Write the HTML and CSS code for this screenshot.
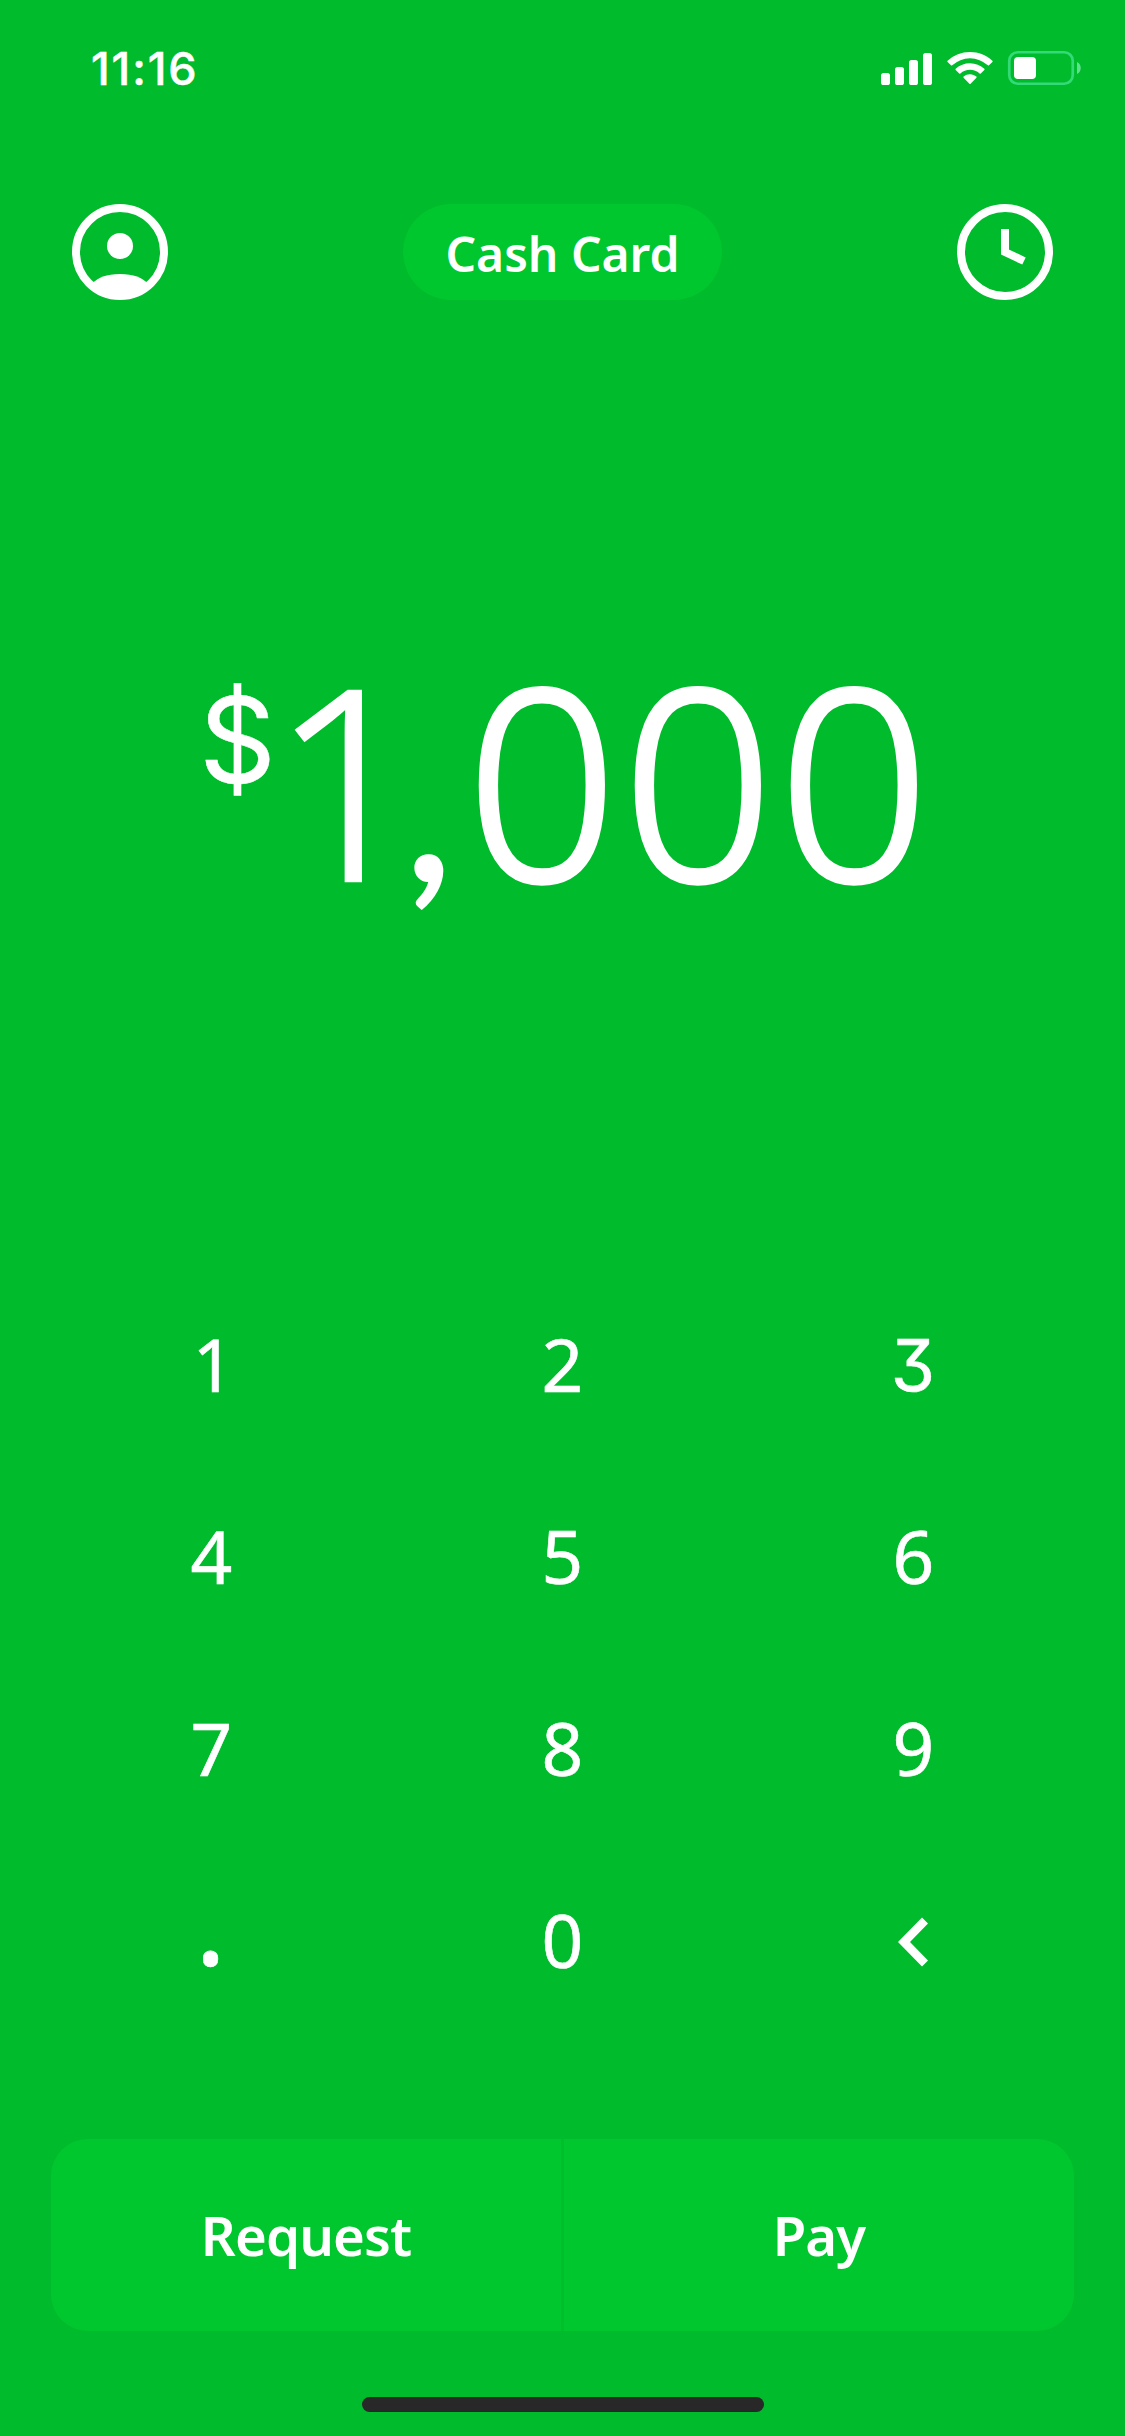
FILE: index.html
```html
<!DOCTYPE html>
<html lang="en">
<head>
<meta charset="utf-8">
<title>Cash</title>
<link rel="stylesheet" href="styles.css">
</head>
<body>
<main class="screen">
  <div class="status">
    <span class="time">11:16</span>
    <svg class="indicators" width="204" height="40" viewBox="0 0 204 40" fill="#fff" aria-hidden="true">
      <rect x="1" y="24" width="9" height="12" rx="2.6"/>
      <rect x="15" y="18" width="9" height="18" rx="2.6"/>
      <rect x="29" y="11" width="9" height="25" rx="2.6"/>
      <rect x="43" y="4" width="9" height="32" rx="2.6"/>
      <path d="M90 3c8.600 0 16.500 3.300 22.400 8.700q.6.600 0 1.200l-3.400 3.400q-.6.600-1.200 0a26.200 26.200 0 0 0-35.600 0q-.6.600-1.200 0l-3.400-3.400q-.6-.6 0-1.200A33 33 0 0 1 90 3z"/>
      <path d="M90 14.300c5.500 0 10.500 2.100 14.300 5.500q.7.600 0 1.300l-3.500 3.400q-.6.600-1.200 0a14.300 14.300 0 0 0-19.200 0q-.6.600-1.200 0l-3.500-3.400q-.7-.7 0-1.300A21.400 21.400 0 0 1 90 14.300z"/>
      <path d="M90 25.200c2.500 0 4.700.9 6.400 2.400q.6.600 0 1.200l-5.800 6q-.6.600-1.200 0l-5.800-6q-.6-.6 0-1.200a9.800 9.800 0 0 1 6.400-2.400z"/>
      <rect x="129.250" y="3.250" width="63.500" height="31.500" rx="8.500" fill="none" stroke="#35da78" stroke-width="2.700"/>
      <rect x="134" y="8" width="22" height="22" rx="4"/>
      <path d="M197 13c5 2.200 5 9.800 0 12z" fill="#5fe08f"/>
    </svg>
  </div>

  <header class="header">
    <svg width="96" height="96" viewBox="0 0 96 96" aria-label="Profile">
      <circle cx="48" cy="48" r="44" fill="none" stroke="#fff" stroke-width="8"/>
      <circle cx="48" cy="42" r="13" fill="#fff"/>
      <path d="M20 80Q28 70 48 70T76 80A44 44 0 0 1 20 80z" fill="#fff"/>
    </svg>
    <button class="pill">Cash Card</button>
    <svg width="96" height="96" viewBox="0 0 96 96" fill="none" stroke="#fff" stroke-width="8" aria-label="Activity">
      <circle cx="48" cy="48" r="44"/>
      <path d="M48 25V48L67 57"/>
    </svg>
  </header>

  <div class="amount"><span class="dollar">$</span><span class="digit lead">1</span><span class="comma">,</span><span class="digit">0</span><span class="digit">0</span><span class="digit">0</span></div>

  <div class="keypad">
    <span class="one">1</span><span>2</span><span class="three">3</span>
    <span class="nudge">4</span><span>5</span><span class="back-nudge">6</span>
    <span class="nudge">7</span><span>8</span><span class="back-nudge">9</span>
    <span class="point">.</span><span>0</span>
    <span><svg width="30" height="50" viewBox="0 0 30 50" class="back" aria-label="Delete"><path d="M24 .5L30 6.500L12 25L30 43.500L24 49.500L0 25z" fill="#fff"/></svg></span>
  </div>

  <div class="actions">
    <button class="request">Request</button>
    <button class="pay">Pay</button>
  </div>
  <div class="home"></div>
</main>
</body>
</html>
```
FILE: styles.css
```css
* { box-sizing: border-box; }
body { margin: 0; background: #00bb2c; }
button { border: 0; padding: 0; color: inherit; font: inherit; }
svg { display: block; }
.screen {
  display: flex;
  flex-direction: column;
  width: 1125px;
  height: 2436px;
  overflow: hidden;
  background: #00bb2c;
  color: #fff;
  font-family: "Noto Sans", "Open Sans", sans-serif;
}
.status {
  display: flex;
  justify-content: space-between;
  height: 204px;
  padding: 49px 41px 0 91px;
}
.time {
  font: 500 45px/40px Inter, sans-serif;
  letter-spacing: 1.900px;
  -webkit-text-stroke: 0.500px #fff;
}
.header {
  display: flex;
  justify-content: space-between;
  height: 96px;
  padding: 0 72px;
}
.pill {
  width: 319px;
  height: 96px;
  padding-top: 3px;
  border-radius: 48px;
  background: #00c72d;
  font-size: 48px;
  font-weight: 600;
  line-height: 93px;
}
.amount {
  display: flex;
  height: 300px;
  margin-top: 328px;
  padding-left: 199px;
  line-height: 300px;
  font-size: 266px;
  font-weight: 300;
}
.digit {
  width: 156px;
  -webkit-text-stroke: 4px #fff;
}
.lead {
  width: 135px;
  letter-spacing: -20px;
  -webkit-text-stroke-width: 2.500px;
}
.dollar {
  width: 72px;
  font: 400 120px/224px Inter, sans-serif;
  letter-spacing: -8px;
  -webkit-text-stroke: 0.500px #fff;
}
.comma {
  width: 60px;
  font: 700 195px/359px Lato, sans-serif;
}
.keypad {
  display: grid;
  grid-template-columns: repeat(3, 352px);
  grid-auto-rows: 192px;
  justify-content: center;
  margin-top: 340px;
  font-size: 73px;
  font-weight: 400;
  line-height: 192px;
  text-align: center;
  -webkit-text-stroke: 0.600px #fff;
}
.one { padding-left: 6px; }
.nudge { padding-left: 2px; }
.back-nudge { padding-right: 2px; }
.three {
  padding-right: 3px;
  font-family: Inter, sans-serif;
  font-size: 71.500px;
  line-height: 195px;
  font-feature-settings: "cv09";
}
.point {
  font-size: 118px;
  line-height: 152px;
}
.back { margin: 73px auto 0 159px; }
.actions {
  display: grid;
  grid-template-columns: 510px 510px;
  gap: 3px;
  height: 192px;
  margin: 103px 51px 0;
  border-radius: 37px;
  overflow: hidden;
  background: #00bf2c;
  font-size: 54.500px;
  font-weight: 600;
}
.actions button {
  background: #00c72d;
  line-height: 192px;
  letter-spacing: -0.900px;
}
.home {
  width: 402px;
  height: 15px;
  margin: 66px auto 0 362px;
  border-radius: 7.500px;
  background: #282828;
}
```
